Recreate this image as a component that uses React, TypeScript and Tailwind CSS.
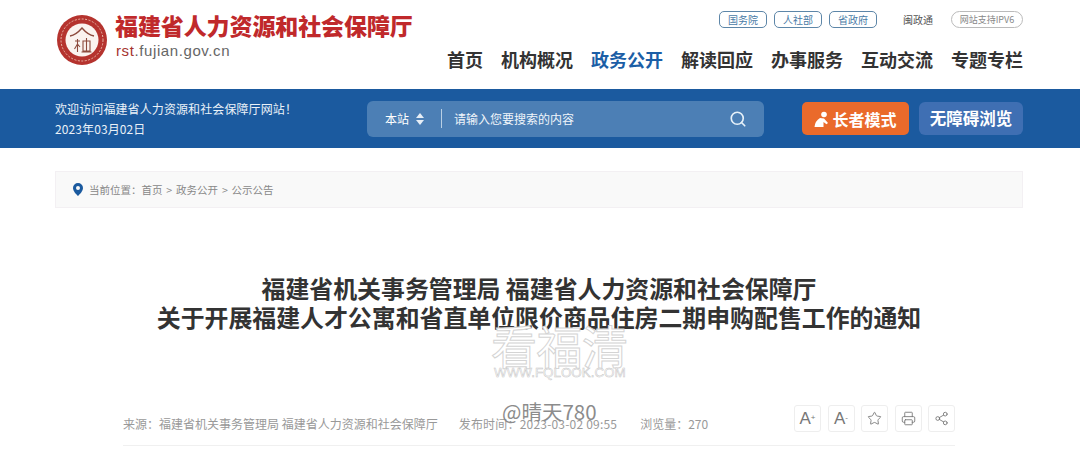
import React from 'react'
import { Search, Star, Printer, Share2 } from 'lucide-react'

const font = "font-['Noto_Sans_CJK_SC','Noto_Sans',sans-serif]"

const navItems = ['首页', '机构概况', '政务公开', '解读回应', '办事服务', '互动交流', '专题专栏']

function Logo() {
  return (
    <svg width="52" height="52" viewBox="0 0 52 52" className="shrink-0">
      <circle cx="26" cy="26" r="25" fill="#b5332e" />
      <circle cx="26" cy="26" r="16.5" fill="#fbf3ef" />
      <circle cx="26" cy="26" r="21" fill="none" stroke="#e9b7a8" strokeWidth="1" strokeDasharray="2 1.5" />
      <path d="M14 22 Q20 21 26 14 Q32 21 38 22" fill="none" stroke="#8d4a3c" strokeWidth="1.4" />
      <path d="M19 27h5M21.5 25v13M21.5 30l-3 5M21.5 30l2.5 3M27 27h7v10h-7zM30.5 24v13M25.5 38h10" fill="none" stroke="#8d4a3c" strokeWidth="1.1" />
    </svg>
  )
}

function Pill({ children }: { children: React.ReactNode }) {
  return (
    <span className="flex h-[17px] w-[48px] items-center justify-center rounded-[5px] border border-[#5d86a8] text-[10px] leading-none text-[#4a7ba6]">
      {children}
    </span>
  )
}

function ToolBtn({ children }: { children: React.ReactNode }) {
  return (
    <div className="flex h-[27px] w-[27px] items-center justify-center rounded-[3px] border border-[#eeeeee] bg-white text-[#777]">
      {children}
    </div>
  )
}

export default function App() {
  return (
    <div className={`relative h-[459px] w-[1080px] overflow-hidden bg-white ${font}`}>
      {/* top header */}
      <header className="flex h-[89px] pl-[56px] pr-[57px]">
        <div className="flex items-start gap-[7px] pt-[14px]">
          <Logo />
          <div className="flex flex-col">
            <span className="-mt-[3px] text-[23px] font-black leading-[28px] tracking-[-0.1px] text-[#c0292b]">福建省人力资源和社会保障厅</span>
            <span className="mt-[4px] pl-[1px] font-['Liberation_Sans',sans-serif] text-[15px] leading-[16px] tracking-[0.6px] text-[#666]">
              <span className="text-[#a5332f]">rst</span>.fujian.gov.cn
            </span>
          </div>
        </div>
        <div className="ml-auto flex flex-col items-end">
          <div className="flex items-center pt-[11px]">
            <div className="flex gap-[7px]">
              <Pill>国务院</Pill>
              <Pill>人社部</Pill>
              <Pill>省政府</Pill>
            </div>
            <span className="ml-[26px] text-[10px] leading-[17px] text-[#555]">闽政通</span>
            <span className="ml-[18px] flex h-[17px] w-[72px] items-center justify-center rounded-full border border-[#bbbbbb] text-[9px] leading-none text-[#888]">网站支持IPV6</span>
          </div>
          <nav className="mt-[16px] flex gap-[18px]">
            {navItems.map((item) => (
              <a key={item} className={`text-[18px] font-bold leading-[30px] ${item === '政务公开' ? 'text-[#1b5ea6]' : 'text-[#333]'}`}>
                {item}
              </a>
            ))}
          </nav>
        </div>
      </header>

      {/* blue band */}
      <div className="flex h-[59px] items-center bg-[#1b5a9f] pl-[55px] pr-[57px]">
        <div className="w-[312px] text-[12px] leading-[20px] tracking-[0.1px] text-[#eaf1f8]">
          <p>欢迎访问福建省人力资源和社会保障厅网站！</p>
          <p>2023年03月02日</p>
        </div>
        <div className="flex h-[36px] w-[397px] items-center rounded-[6px] bg-[#4c7fb5] pl-[18px] pr-[17px] text-[12px] text-white">
          <span>本站</span>
          <span className="ml-[7px] flex flex-col gap-[2px]">
            <span className="h-0 w-0 border-x-[4px] border-b-[5px] border-x-transparent border-b-[#e6eef6]" />
            <span className="h-0 w-0 border-x-[4px] border-t-[5px] border-x-transparent border-t-[#e6eef6]" />
          </span>
          <span className="ml-[17px] h-[19px] w-px bg-[#b9cfe4]" />
          <span className="ml-[12px] text-[#f0f5fa]">请输入您要搜索的内容</span>
          <Search className="ml-auto h-[18px] w-[18px] text-[#e6f1f9]" strokeWidth={2.2} />
        </div>
        <button className="ml-[38px] flex h-[33px] w-[107px] items-center justify-center gap-[3px] rounded-[5px] bg-[#ea6a2b] text-[16px] font-bold text-white">
          <svg width="15" height="16" viewBox="0 0 15 16" className="shrink-0">
            <circle cx="10" cy="3.5" r="2.8" fill="#fff" />
            <path d="M0.5 16 Q1 10 6 7 L10 7.5 L14 12 L12.5 13.2 L9.5 11 L9.5 16Z" fill="#fff" />
          </svg>
          长者模式
        </button>
        <button className="ml-[10px] h-[33px] w-[104px] rounded-[6px] bg-[#3f6fb3] text-[16.5px] font-bold text-white">无障碍浏览</button>
      </div>

      {/* article panel */}
      <main className="ml-[55px] mt-[23px] w-[968px]">
        <div className="flex h-[37px] items-center border border-[#f3f0f3] bg-[#f9f9f9] pl-[17px] text-[10.5px] text-[#888] [word-spacing:1.5px]">
          <svg width="10" height="13" viewBox="0 0 10 13" className="shrink-0">
            <path fillRule="evenodd" d="M5 0a5 5 0 0 1 5 5c0 3-3 6-5 8-2-2-5-5-5-8a5 5 0 0 1 5-5Zm0 3a2 2 0 1 0 0 4 2 2 0 0 0 0-4Z" fill="#1b5a9f" />
          </svg>
          <span className="ml-[6px]">当前位置：首页 &gt; 政务公开 &gt; 公示公告</span>
        </div>
        <div className="px-[68px]">
          <h1 className="pt-[65px] text-center text-[23.9px] font-bold leading-[29px] text-[#333]">
            福建省机关事务管理局 福建省人力资源和社会保障厅
            <br />
            关于开展福建人才公寓和省直单位限价商品住房二期申购配售工作的通知
          </h1>
          <div className="mt-[74px] flex h-[41px] items-start justify-between border-b border-[#f0f0f0]">
            <div className="flex pt-[10px] text-[12px] text-[#999]">
              <span>来源：福建省机关事务管理局 福建省人力资源和社会保障厅</span>
              <span className="ml-[21px] tracking-[0.2px]">发布时间：2023-03-02 09:55</span>
              <span className="ml-[23px]">浏览量：270</span>
            </div>
            <div className="flex gap-[6.5px]">
              <ToolBtn><span className="font-['Liberation_Sans',sans-serif] text-[17px] leading-none">A<sup className="text-[8px]">+</sup></span></ToolBtn>
              <ToolBtn><span className="font-['Liberation_Sans',sans-serif] text-[17px] leading-none">A<sup className="text-[8px]">-</sup></span></ToolBtn>
              <ToolBtn><Star className="h-[15px] w-[15px]" strokeWidth={1.4} /></ToolBtn>
              <ToolBtn><Printer className="h-[15px] w-[15px]" strokeWidth={1.4} /></ToolBtn>
              <ToolBtn><Share2 className="h-[15px] w-[15px]" strokeWidth={1.4} /></ToolBtn>
            </div>
          </div>
        </div>
      </main>

      {/* watermarks over the page */}
      <div className="absolute left-[491px] top-[319px] text-[46px] leading-[50px] tracking-[-0.5px] text-white [-webkit-text-stroke:1px_#d4d4d4]">看福清</div>
      <div className="absolute left-[494px] top-[365px] font-['Liberation_Sans',sans-serif] text-[13.4px] leading-[15px] text-white [-webkit-text-stroke:0.5px_#c4c4c4]">WWW.FQLOOK.COM</div>
      <div className="absolute left-[502px] top-[399px] text-[20.5px] leading-[24px] text-[#8c8c8c]">@晴天780</div>
    </div>
  )
}
